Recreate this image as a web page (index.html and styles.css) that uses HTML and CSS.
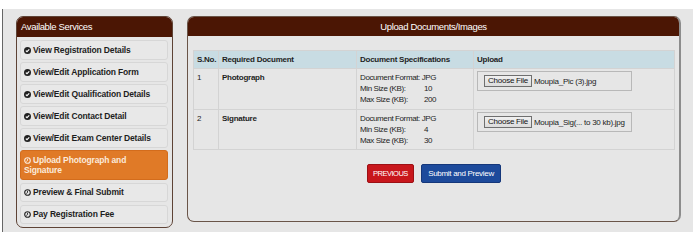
FILE: index.html
```html
<!DOCTYPE html>
<html lang="en">
<head>
    <meta charset="UTF-8">
    <meta name="viewport" content="width=device-width, initial-scale=1.0">
    <title>Registration - Upload Documents</title>
    <link rel="stylesheet" href="styles.css">
</head>
<body>
    <div class="page">
        <div class="layout">
            <!-- Services Menu -->
            <aside class="services">
                <div class="panel-head">Available Services</div>
                <ul class="service-list">
                    <li class="service done"><svg class="ico" viewBox="0 0 10 10"><circle cx="5" cy="5" r="5"/><path d="M2.6 5.1 L4.3 6.8 L7.5 3.5"/></svg>View Registration Details</li>
                    <li class="service done"><svg class="ico" viewBox="0 0 10 10"><circle cx="5" cy="5" r="5"/><path d="M2.6 5.1 L4.3 6.8 L7.5 3.5"/></svg>View/Edit Application Form</li>
                    <li class="service done"><svg class="ico" viewBox="0 0 10 10"><circle cx="5" cy="5" r="5"/><path d="M2.6 5.1 L4.3 6.8 L7.5 3.5"/></svg>View/Edit Qualification Details</li>
                    <li class="service done"><svg class="ico" viewBox="0 0 10 10"><circle cx="5" cy="5" r="5"/><path d="M2.6 5.1 L4.3 6.8 L7.5 3.5"/></svg>View/Edit Contact Detail</li>
                    <li class="service done"><svg class="ico" viewBox="0 0 10 10"><circle cx="5" cy="5" r="5"/><path d="M2.6 5.1 L4.3 6.8 L7.5 3.5"/></svg>View/Edit Exam Center Details</li>
                    <li class="service active"><svg class="ico clock" viewBox="0 0 10 10"><circle cx="5" cy="5" r="4"/><path d="M5 2.6 V5.2 L3.2 6.4"/></svg>Upload Photograph and<br>Signature</li>
                    <li class="service"><svg class="ico clock" viewBox="0 0 10 10"><circle cx="5" cy="5" r="4"/><path d="M5 2.6 V5.2 L3.2 6.4"/></svg>Preview &amp; Final Submit</li>
                    <li class="service"><svg class="ico clock" viewBox="0 0 10 10"><circle cx="5" cy="5" r="4"/><path d="M5 2.6 V5.2 L3.2 6.4"/></svg>Pay Registration Fee</li>
                </ul>
            </aside>

            <!-- Upload Panel -->
            <section class="upload-panel">
                <div class="panel-head centered">Upload Documents/Images</div>
                <div class="upload-body">
                    <table class="doc-table">
                        <thead>
                            <tr>
                                <th class="col-sno">S.No.</th>
                                <th class="col-doc">Required Document</th>
                                <th class="col-spec">Document Specifications</th>
                                <th>Upload</th>
                            </tr>
                        </thead>
                        <tbody>
                            <tr class="row-photo">
                                <td>1</td>
                                <td class="doc-name">Photograph</td>
                                <td>
                                    <div class="spec">Document Format: JPG</div>
                                    <div class="spec"><span class="spec-label">Min Size (KB):</span>10</div>
                                    <div class="spec"><span class="spec-label">Max Size (KB):</span>200</div>
                                </td>
                                <td>
                                    <div class="file-box"><span class="file-btn">Choose File</span><span class="file-name">Moupia_Pic (3).jpg</span></div>
                                </td>
                            </tr>
                            <tr class="row-sign">
                                <td>2</td>
                                <td class="doc-name">Signature</td>
                                <td>
                                    <div class="spec">Document Format: JPG</div>
                                    <div class="spec"><span class="spec-label">Min Size (KB):</span>4</div>
                                    <div class="spec"><span class="spec-label">Max Size (KB):</span>30</div>
                                </td>
                                <td>
                                    <div class="file-box"><span class="file-btn">Choose File</span><span class="file-name">Moupia_Sig(... to 30 kb).jpg</span></div>
                                </td>
                            </tr>
                        </tbody>
                    </table>

                    <div class="actions">
                        <button class="prev-btn">PREVIOUS</button>
                        <button class="submit-btn">Submit and Preview</button>
                    </div>
                </div>
            </section>
        </div>
    </div>
</body>
</html>
```

FILE: styles.css
```css
:root {
    --brown: #4b1604;
    --panel-border: #5e4336;
    --page-bg: #e6e6e6;
    --orange: #e07a27;
    --table-head: #c8dce3;
    --line: #d3d3d3;
    --text: #1e1e1e;
}

* {
    margin: 0;
    padding: 0;
    box-sizing: border-box;
    font-family: 'Liberation Sans', Arial, sans-serif;
}

body {
    background: #fff;
    color: var(--text);
}

.page {
    margin: 9px 0 0 2px;
    height: 223px;
    border-left: 1px solid #666;
    background: var(--page-bg);
    padding: 7px 0 0 13px;
}

.layout {
    display: flex;
    align-items: flex-start;
    gap: 14px;
}

.panel-head {
    background: var(--brown);
    color: #fff;
    height: 19px;
    line-height: 19px;
    font-size: 9.5px;
    letter-spacing: -0.35px;
    padding-left: 4px;
    white-space: nowrap;
}

.panel-head.centered {
    text-align: center;
    padding-left: 0;
}

/* Services menu */
.services {
    width: 157px;
    height: 212px;
    border: 1px solid var(--panel-border);
    border-radius: 7px;
    overflow: hidden;
}

.services .panel-head {
    height: 20px;
    line-height: 20px;
}

.service-list {
    list-style: none;
    padding: 3px 4px 0 3px;
}

.service {
    padding: 3.5px 3px;
    line-height: 10.5px;
    font-size: 8.5px;
    font-weight: bold;
    letter-spacing: -0.15px;
    white-space: nowrap;
    border: 1px solid #d7d7d7;
    border-radius: 3px;
    background: #e8e8e8;
    margin-bottom: 2.5px;
}

.ico {
    display: inline-block;
    width: 7px;
    height: 7px;
    margin-right: 2px;
    vertical-align: -1px;
}

.ico circle {
    fill: #222;
}

.ico path {
    fill: none;
    stroke: #fff;
    stroke-width: 1.6;
}

.ico.clock circle {
    fill: none;
    stroke: #222;
    stroke-width: 1.6;
}

.ico.clock path {
    stroke: #222;
    stroke-width: 1.3;
}

.service.active {
    background: var(--orange);
    border-color: #d36c1c;
    color: #fbeadb;
}

.service.active .ico.clock circle,
.service.active .ico.clock path {
    stroke: #fbeadb;
}

/* Upload panel */
.upload-panel {
    width: 494px;
    height: 206px;
    border: 1px solid #6a5549;
    border-right: 2px solid #8c8c8c;
    border-radius: 7px;
    overflow: hidden;
}

.upload-body {
    padding: 14px 4px 0 5px;
}

.doc-table {
    width: 482px;
    table-layout: fixed;
    border-collapse: collapse;
    font-size: 8px;
    letter-spacing: -0.4px;
}

.doc-table th,
.doc-table td {
    border: 1px solid var(--line);
    text-align: left;
    vertical-align: top;
    padding: 3px 3px;
    line-height: 11px;
    white-space: nowrap;
}

.doc-table th {
    background: var(--table-head);
    height: 18px;
    vertical-align: middle;
    padding-top: 0;
    padding-bottom: 0;
    letter-spacing: -0.25px;
}

.col-sno {
    width: 25px;
}

.col-doc {
    width: 138px;
}

.col-spec {
    width: 117px;
}

.row-photo td {
    height: 41px;
}

.row-sign td {
    height: 40px;
}

.doc-name {
    font-weight: bold;
    letter-spacing: -0.25px;
}

.spec-label {
    display: inline-block;
    width: 64px;
}

.doc-table td .file-box {
    margin-top: -1px;
}

.file-box {
    display: flex;
    align-items: center;
    gap: 2px;
    width: 155px;
    height: 20px;
    border: 1px solid #b8b8b8;
    padding: 0 6px;
    letter-spacing: -0.25px;
}

.file-btn {
    flex: none;
    border: 1px solid #6f6f6f;
    background: linear-gradient(#f0f0f0, #dcdcdc);
    height: 12px;
    line-height: 10px;
    padding: 0 3px;
    color: #111;
}

.file-name {
    color: #222;
}

.actions {
    display: flex;
    justify-content: center;
    gap: 7px;
    margin-top: 14px;
}

.prev-btn,
.submit-btn {
    height: 19px;
    border-radius: 2px;
    color: #fff;
    font-size: 8px;
    white-space: nowrap;
    cursor: pointer;
}

.prev-btn {
    width: 47px;
    font-size: 7.5px;
    letter-spacing: -0.5px;
    background: #c8171c;
    border: 1px solid #9c1014;
}

.submit-btn {
    width: 80px;
    letter-spacing: -0.3px;
    background: #1d4a9b;
    border: 1px solid #15377a;
}
```
